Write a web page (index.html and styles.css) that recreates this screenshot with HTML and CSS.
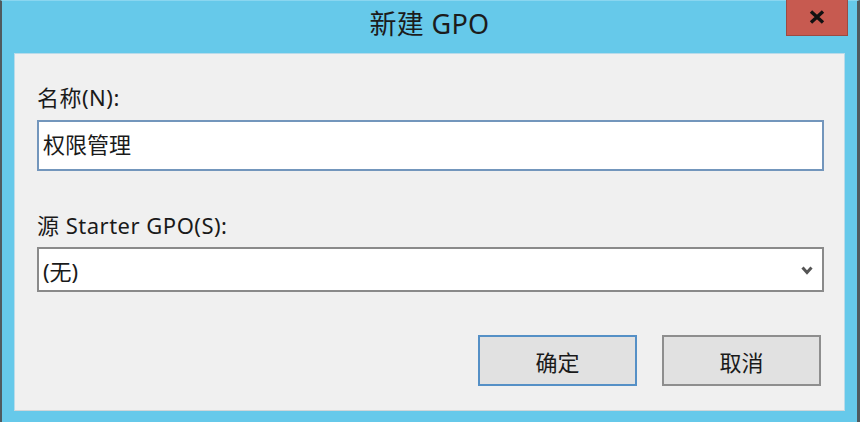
FILE: index.html
```html
<!DOCTYPE html>
<html lang="zh-CN">
<head>
<meta charset="utf-8">
<title>新建 GPO</title>
<link rel="stylesheet" href="styles.css">
</head>
<body>
<div class="window">
  <div class="titlebar">
    <div class="spacer"></div>
    <div class="title">新建 GPO</div>
    <div class="close"><svg width="16" height="14" viewBox="0 0 16 14"><path d="M2 1.5 L14 12.5 M14 1.5 L2 12.5" stroke="#111" stroke-width="3.4" fill="none"/></svg></div>
  </div>
  <div class="content">
    <div class="label label-name">名称(N):</div>
    <div class="textbox">权限管理</div>
    <div class="label label-src">源 Starter GPO(S):</div>
    <div class="combo">
      <span class="combo-text">(无)</span>
      <svg class="chevron" width="12" height="9" viewBox="0 0 12 9"><polyline points="1.5,1.5 6,6.5 10.5,1.5" stroke="#555" stroke-width="3" fill="none"/></svg>
    </div>
    <div class="buttons">
      <div class="btn btn-default">确定</div>
      <div class="btn">取消</div>
    </div>
  </div>
</div>
</body>
</html>
```
FILE: styles.css
```css
html, body {
  margin: 0;
  padding: 0;
}
body {
  width: 860px;
  height: 422px;
  overflow: hidden;
  font-family: "Noto Sans", "Noto Sans CJK SC", sans-serif;
  color: #1a1a1a;
}
.window {
  box-sizing: border-box;
  width: 860px;
  height: 422px;
  background: #66c9ea;
  border-left: 2px solid #4f5a5f;
  border-right: 3px solid #4f5a5f;
  border-top: 1px solid #8ad6f0;
  display: flex;
  flex-direction: column;
}
.titlebar {
  height: 52px;
  display: grid;
  grid-template-columns: 1fr auto 1fr;
}
.title {
  font-size: 27px;
  line-height: 46px;
  letter-spacing: 0.3px;
  color: #1c1c1c;
}
.close {
  justify-self: end;
  align-self: start;
  margin-top: -1px;
  margin-right: 9px;
  width: 60px;
  height: 35px;
  background: #c75a50;
  border: 1px solid #9c4a42;
  border-top: none;
  display: flex;
  align-items: center;
  justify-content: center;
}
.close svg {
  margin-top: -2px;
}
.content {
  flex: 1;
  margin: 0 12px 11px 12px;
  background: #f0f0f0;
  border: 1px solid #b9dbea;
  border-bottom-color: #d0d6d9;
  padding: 0 20px 0 22px;
}
.label {
  font-size: 22px;
  line-height: 30px;
  letter-spacing: 0.5px;
}
.label-name {
  margin-top: 28px;
}
.label-src {
  margin-top: 39px;
}
.textbox {
  margin-top: 8px;
  height: 47px;
  border: 2px solid #7396bc;
  background: #fff;
  font-size: 22px;
  line-height: 45px;
  padding-left: 4px;
}
.combo {
  margin-top: 7px;
  height: 41px;
  border: 2px solid #8a8a8a;
  background: #fff;
  display: flex;
  align-items: center;
  justify-content: space-between;
  padding: 0 9px 0 4px;
  font-size: 22px;
}
.chevron {
  margin-top: 1px;
}
.buttons {
  margin-top: 43px;
  display: flex;
  justify-content: flex-end;
  gap: 25px;
  padding-right: 3px;
}
.btn {
  box-sizing: border-box;
  width: 159px;
  height: 51px;
  background: #e1e1e1;
  border: 2px solid #8e8e8e;
  font-size: 22px;
  display: flex;
  align-items: center;
  justify-content: center;
}
.btn-default {
  border-color: #5590c6;
}
```
